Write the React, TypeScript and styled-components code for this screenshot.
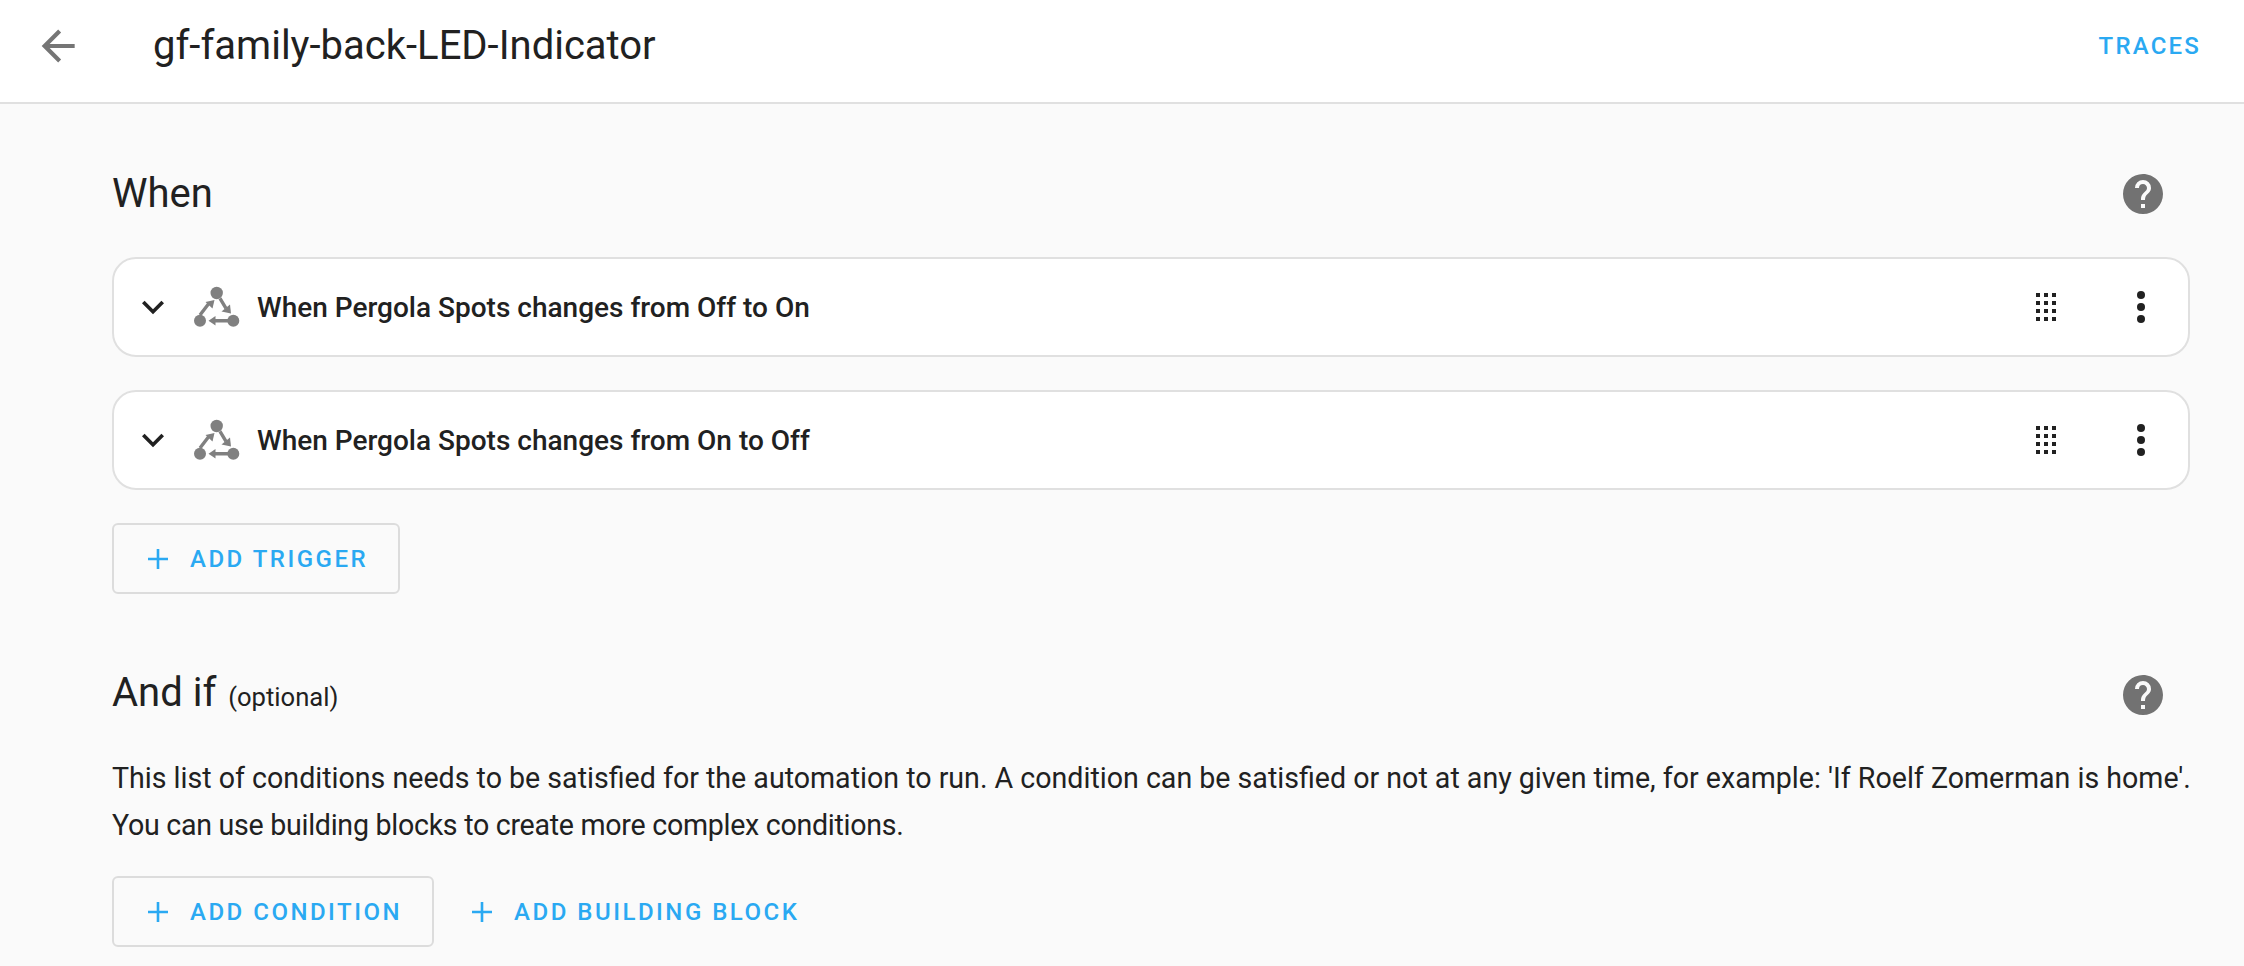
import React from 'react';
import styled, { createGlobalStyle } from 'styled-components';

const Global = createGlobalStyle`
  html, body { margin: 0; padding: 0; height: 100%; overflow: hidden; background: #fafafa; }
  body { font-family: Roboto, "Liberation Sans", sans-serif; color: #212121; }
`;

const Page = styled.div`
  width: 2244px; height: 966px; overflow: hidden; background: #fafafa;
`;
const TopBar = styled.header`
  height: 104px; box-sizing: border-box; display: flex; align-items: center; background: #fff;
  border-bottom: 2px solid #e0e0e0; padding: 0 43px 10px 33px;
`;
const BackButton = styled.div`
  width: 50px; height: 50px; display: flex; align-items: center; justify-content: center; margin-right: 70px; color: #757575;
`;
const Title = styled.h1`
  margin: 0; flex: 1; font-size: 40px; font-weight: 400; line-height: 1; color: #212121;
`;
const Traces = styled.span`
  font-size: 24px; font-weight: 500; letter-spacing: 2.2px; color: #2aa9f2;
`;
const Content = styled.main`
  padding: 0 54px 0 112px;
`;
const SectionHead = styled.div<{ $top: number }>`
  display: flex; align-items: center; justify-content: space-between; padding-top: ${p => p.$top}px; height: 44px; padding-right: 23px;
`;
const Heading = styled.h2`
  margin: 0; font-size: 40px; font-weight: 400; line-height: 44px; color: #212121;
  small { font-size: 25.6px; margin-left: 2px; }
`;
const HelpIcon = styled.svg`
  width: 48px; height: 48px; fill: #727272; display: block;
`;
const Cards = styled.div`
  display: flex; flex-direction: column; gap: 33px; margin-top: 41px;
`;
const Card = styled.div`
  height: 100px; box-sizing: border-box; display: flex; align-items: center; background: #fff;
  border: 2px solid #e0e0e0; border-radius: 24px; padding: 0 42px 0 17px;
`;
const Chevron = styled.svg`
  width: 44px; height: 44px; fill: #212121; margin-right: 18px; flex: none;
`;
const NodeIcon = styled.svg`
  width: 48px; height: 48px; flex: none; margin-right: 16px; display: block;
`;
const CardTitle = styled.div`
  flex: 1; font-size: 28px; font-weight: 500; color: #212121;
`;
const Grip = styled.svg`
  width: 24px; height: 30px; fill: #212121; margin-right: 78px; flex: none;
`;
const Dots = styled.svg`
  width: 10px; height: 30px; fill: #212121; flex: none; overflow: visible;
`;
const Outlined = styled.div`
  display: inline-flex; align-items: center; height: 71px; box-sizing: border-box; padding: 0 30px 0 34px;
  border: 2px solid #dcdcdc; border-radius: 6px; color: #2aa9f2; font-size: 24px; font-weight: 500; letter-spacing: 2.5px;
`;
const TextButton = styled(Outlined)`
  border-color: transparent; padding: 0 0 0 34px; 
`;
const PlusIcon = styled.svg`
  width: 20px; height: 20px; margin-right: 22px; stroke: #2aa9f2; stroke-width: 2.6; flex: none;
`;
const Description = styled.p`
  margin: 38px 0 0; font-size: 28.6px; line-height: 47px; color: #212121; width: 2090px;
`;
const Narrow = styled.span`
  letter-spacing: -0.28px;
`;
const Actions = styled.div`
  display: flex; align-items: center; margin-top: 27px; gap: 2px;
`;
const TriggerRow = styled.div`
  margin-top: 33px;
`;

const Plus = () => (
  <PlusIcon viewBox="0 0 20 20"><path d="M10 0V20M0 10H20" fill="none" /></PlusIcon>
);

const Help = () => (
  <HelpIcon viewBox="0 0 24 24">
    <path d="M15.07,11.25L14.17,12.17C13.45,12.89 13,13.5 13,15H11V14.5C11,13.39 11.45,12.39 12.17,11.67L13.41,10.41C13.78,10.05 14,9.55 14,9C14,7.89 13.1,7 12,7A2,2 0 0,0 10,9H8A4,4 0 0,1 12,5A4,4 0 0,1 16,9C16,9.88 15.64,10.67 15.07,11.25M13,19H11V17H13M12,2A10,10 0 0,0 2,12A10,10 0 0,0 12,22A10,10 0 0,0 22,12C22,6.47 17.5,2 12,2Z" />
  </HelpIcon>
);

function TriggerCard({ title }: { title: string }) {
  const grip = [];
  for (let r = 0; r < 4; r++) for (let c = 0; c < 3; c++) grip.push(<rect key={`${r}-${c}`} x={2 + c * 8} y={1 + r * 8} width="4" height="4" />);
  return (
    <Card>
      <Chevron viewBox="0 0 24 24"><path d="M7.41,8.58L12,13.17L16.59,8.58L18,10L12,16L6,10L7.41,8.58Z" /></Chevron>
      <NodeIcon viewBox="0 0 48 48">
        <g fill="#808080">
          <circle cx="23.7" cy="10" r="6.2" />
          <circle cx="7" cy="37.7" r="6" />
          <circle cx="40.3" cy="37.7" r="6" />
          <path d="M21.5 17L12.5 19L19.5 25.5Z" />
          <path d="M38 30.5L28.5 28.5L37 21.5Z" />
          <path d="M15.5 37.7L22.5 33L22.5 42.4Z" />
        </g>
        <path d="M7 32L16 20.3M27 15.3L33 25.3M35.3 37.7L22 37.7" stroke="#808080" strokeWidth="3.4" fill="none" />
      </NodeIcon>
      <CardTitle>{title}</CardTitle>
      <Grip viewBox="0 0 24 30">{grip}</Grip>
      <Dots viewBox="0 0 10 30">
        <circle cx="5" cy="3" r="4" />
        <circle cx="5" cy="15" r="4" />
        <circle cx="5" cy="27" r="4" />
      </Dots>
    </Card>
  );
}

export default function App() {
  return (
    <Page>
      <Global />
      <TopBar>
        <BackButton>
          <svg width="50" height="50" viewBox="0 0 24 24" fill="#757575"><path d="M20,11V13H8L13.5,18.5L12.08,19.92L4.16,12L12.08,4.08L13.5,5.5L8,11H20Z" /></svg>
        </BackButton>
        <Title>gf-family-back-LED-Indicator</Title>
        <Traces>TRACES</Traces>
      </TopBar>
      <Content>
        <SectionHead $top={68}>
          <Heading>When</Heading>
          <Help />
        </SectionHead>
        <Cards>
          <TriggerCard title="When Pergola Spots changes from Off to On" />
          <TriggerCard title="When Pergola Spots changes from On to Off" />
        </Cards>
        <TriggerRow>
          <Outlined><Plus />ADD TRIGGER</Outlined>
        </TriggerRow>
        <SectionHead $top={79}>
          <Heading>And if <small>(optional)</small></Heading>
          <Help />
        </SectionHead>
        <Description>
          This list of conditions needs to be satisfied for the automation to run. A condition can be satisfied or not at any given time, for example: 'If Roelf Zomerman is home'. <Narrow>You can use building blocks to create more complex conditions.</Narrow>
        </Description>
        <Actions>
          <Outlined><Plus />ADD CONDITION</Outlined>
          <TextButton><Plus />ADD BUILDING BLOCK</TextButton>
        </Actions>
      </Content>
    </Page>
  );
}
